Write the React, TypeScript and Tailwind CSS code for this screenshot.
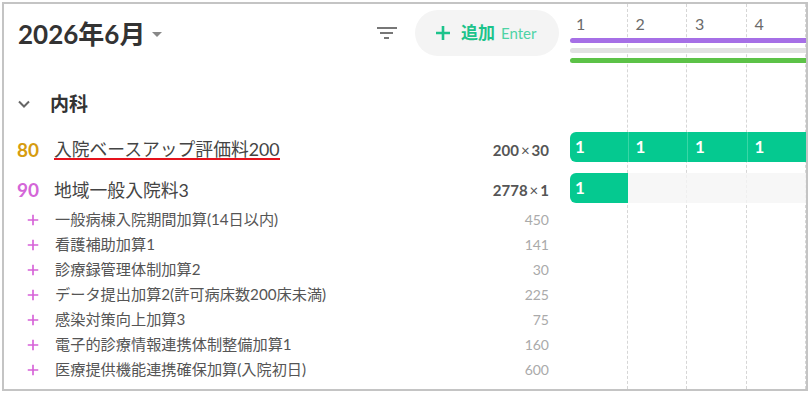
import React from "react";

const days = [1, 2, 3, 4];

const addons = [
  { name: "一般病棟入院期間加算(14日以内)", pts: "450" },
  { name: "看護補助加算1", pts: "141" },
  { name: "診療録管理体制加算2", pts: "30" },
  { name: "データ提出加算2(許可病床数200床未満)", pts: "225" },
  { name: "感染対策向上加算3", pts: "75" },
  { name: "電子的診療情報連携体制整備加算1", pts: "160" },
  { name: "医療提供機能連携確保加算(入院初日)", pts: "600" },
];

function PlusIcon({ size, color, width }: { size: number; color: string; width: number }) {
  return (
    <svg width={size} height={size} viewBox="0 0 16 16" fill="none" stroke={color} strokeWidth={width} strokeLinecap="butt">
      <path d="M8 1v14M1 8h14" />
    </svg>
  );
}

function Qty({ a, b }: { a: string; b: string }) {
  return (
    <span className="ml-auto text-[15px] font-bold text-[#555]">
      {a}
      <span className="mx-[2px] font-normal">×</span>
      {b}
    </span>
  );
}

export default function App() {
  return (
    <div className="w-[811px] h-[393px] bg-white pt-[2px] pl-[2px] font-[Lato,'Noto_Sans_CJK_JP',sans-serif]">
      <div className="w-[806px] h-[389px] border-2 border-[#c4c4c4] relative flex flex-col overflow-hidden">
        {/* day grid lines */}
        <div className="absolute inset-y-0 right-0 left-[564px] flex pointer-events-none">
          {days.map((d) => (
            <div key={d} className="flex-1 border-r border-dashed border-[#d6d6d6]" />
          ))}
        </div>

        {/* header */}
        <div className="relative flex h-[76px]">
          <div className="w-[564px] h-[58px] flex items-center pl-[14px] pr-[9px]">
            <div className="flex items-center gap-[7px] pt-[2px]">
              <span className="text-[26px] font-bold text-[#333] leading-[36px]">2026年6月</span>
              <svg width="10" height="5" viewBox="0 0 10 5" className="mt-[1px]">
                <path d="M0 0h10L5 5z" fill="#888" />
              </svg>
            </div>
            <div className="flex-1" />
            <svg width="20" height="13" viewBox="0 0 20 13" className="mr-[18px]">
              <rect x="0" y="0" width="20" height="2" fill="#777" />
              <rect x="3" y="5" width="13" height="2" fill="#777" />
              <rect x="7" y="10" width="5" height="2" fill="#777" />
            </svg>
            <button className="h-[46px] w-[144px] rounded-full bg-[#f4f4f4] flex items-center pl-[20px] gap-[10px]">
              <PlusIcon size={16} color="#1cc38b" width={2.6} />
              <span className="text-[17px] font-bold text-[#1cc38b]">追加</span>
              <span className="text-[15px] text-[#4dd3a5] -ml-[4px]">Enter</span>
            </button>
          </div>
          <div className="flex-1 flex flex-col">
            <div className="flex pt-[9px]">
              {days.map((d) => (
                <div key={d} className="flex-1 pl-[8px] text-[16px] leading-[22px] text-[#6a6a6a]">
                  {d}
                </div>
              ))}
            </div>
            <div className="ml-[2px] mt-[3px] h-[5px] rounded-l-full bg-[#a66fe6]" />
            <div className="ml-[2px] mt-[5px] h-[5px] rounded-l-full bg-[#e2e2e2]" />
            <div className="ml-[2px] mt-[5px] h-[5px] rounded-l-full bg-[#5cc247]" />
          </div>
        </div>

        {/* section */}
        <div className="relative flex h-[45px]">
          <div className="w-[564px] flex items-center pl-[14px] pt-[3px] gap-[20px]">
            <svg width="12" height="8" viewBox="0 0 12 8" fill="none" stroke="#666" strokeWidth="2">
              <path d="M1 1.5l5 5 5-5" />
            </svg>
            <span className="text-[19px] font-bold text-[#333]">内科</span>
          </div>
        </div>

        {/* row 80 */}
        <div className="relative flex h-[43px]">
          <div className="w-[564px] flex items-center pt-[7px] pl-[13px] pr-[19px]">
            <span className="w-[37px] text-[19px] font-bold text-[#d69c10]">80</span>
            <span className="text-[17.8px] leading-[17px] text-[#444] border-b-2 border-[#e5121c]">入院ベースアップ評価料200</span>
            <Qty a="200" b="30" />
          </div>
          <div className="flex-1 pt-[7px]">
            <div className="flex h-[30px]">
              {days.map((d) => (
                <div key={d} className="flex-1 flex">
                  <div
                    className={
                      d === 1
                        ? "flex-1 ml-[2px] rounded-l-md bg-[#05c990] text-white font-bold text-[17px] leading-[30px] pl-[5px]"
                        : "flex-1 bg-[#05c990] border-l border-[#3ad6a6] text-white font-bold text-[17px] leading-[30px] pl-[7px]"
                    }
                  >
                    1
                  </div>
                </div>
              ))}
            </div>
          </div>
        </div>

        {/* row 90 */}
        <div className="relative flex h-[39px]">
          <div className="w-[564px] flex items-center pt-[6px] pl-[13px] pr-[19px]">
            <span className="w-[37px] text-[19px] font-bold text-[#d466d8]">90</span>
            <span className="text-[17.8px] text-[#444]">地域一般入院料3</span>
            <Qty a="2778" b="1" />
          </div>
          <div className="flex-1 pt-[5px]">
            <div className="flex h-[30px]">
              {days.map((d) => (
                <div key={d} className="flex-1 flex">
                  {d === 1 ? (
                    <div className="flex-1 ml-[2px] rounded-l-md bg-[#05c990] text-white font-bold text-[17px] leading-[30px] pl-[5px]">
                      1
                    </div>
                  ) : (
                    <div className="flex-1 bg-[#f5f5f5]/80" />
                  )}
                </div>
              ))}
            </div>
          </div>
        </div>

        {/* add-ons */}
        {addons.map((a) => (
          <div key={a.name} className="relative flex h-[25px]">
            <div className="w-[564px] flex items-center pl-[23px] pr-[19px] gap-[16px]">
              <PlusIcon size={12} color="#d662d8" width={2.2} />
              <span className="text-[15.2px] text-[#555]">{a.name}</span>
              <span className="ml-auto text-[14px] text-[#aaa]">{a.pts}</span>
            </div>
          </div>
        ))}
      </div>
    </div>
  );
}
